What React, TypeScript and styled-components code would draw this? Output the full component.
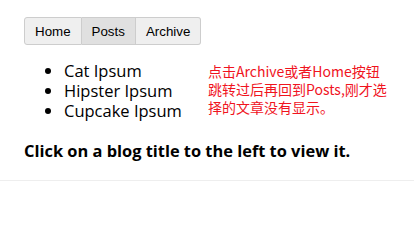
import styled, { createGlobalStyle } from 'styled-components'
import { useState } from 'react'

const GlobalStyle = createGlobalStyle`
  html, body {
    margin: 0;
    padding: 0;
    background: #fff;
  }
  body {
    font-family: 'Open Sans', 'Noto Sans', sans-serif;
    color: #000;
  }
`

const TABS = ['Home', 'Posts', 'Archive']
const POSTS = ['Cat Ipsum', 'Hipster Ipsum', 'Cupcake Ipsum']

const App = () => {
  const [active, setActive] = useState('Posts')

  return (
    <>
      <GlobalStyle />
      <Page>
        <Nav>
          {TABS.map(tab => (
            <TabButton
              key={tab}
              $active={tab === active}
              onClick={() => setActive(tab)}
            >
              {tab}
            </TabButton>
          ))}
        </Nav>
        <Content>
          <PostList>
            {POSTS.map(post => (
              <li key={post}>{post}</li>
            ))}
          </PostList>
          <Note>
            点击Archive或者Home按钮跳转过后再回到Posts,刚才选择的文章没有显示。
          </Note>
        </Content>
        <Hint>Click on a blog title to the left to view it.</Hint>
      </Page>
      <Divider />
    </>
  )
}

export default App

const Page = styled.div`
  padding: 17px 24px 0;
`

const Nav = styled.div`
  display: flex;
`

const TabButton = styled.button<{ $active: boolean }>`
  height: 28px;
  padding: 0 10px;
  margin: 0;
  font-family: 'Liberation Sans', Arial, sans-serif;
  font-size: 13.33px;
  color: #000;
  background: ${({ $active }) => ($active ? '#e0e0e0' : '#efefef')};
  border: 1px solid #cdcdcd;
  border-left-width: 0;
  cursor: pointer;

  &:first-child {
    border-left-width: 1px;
    border-radius: 3px 0 0 3px;
  }

  &:last-child {
    border-radius: 0 3px 3px 0;
  }
`

const Content = styled.div`
  display: flex;
  align-items: flex-start;
  margin-top: 16px;
`

const PostList = styled.ul`
  margin: 0;
  padding-left: 40px;
  font-size: 16.5px;
  line-height: 20px;
  width: 144px;
  flex-shrink: 0;
`

const Note = styled.p`
  margin: 1px 0 0;
  width: 196px;
  color: #f0141e;
  font-family: 'Noto Sans CJK SC', sans-serif;
  font-size: 14px;
  line-height: 18px;
`

const Hint = styled.h4`
  margin: 19px 0 0;
  font-size: 16.4px;
  line-height: 22px;
  font-weight: 700;
`

const Divider = styled.hr`
  margin: 18px 0 0;
  border: 0;
  border-top: 1px solid #eee;
`
